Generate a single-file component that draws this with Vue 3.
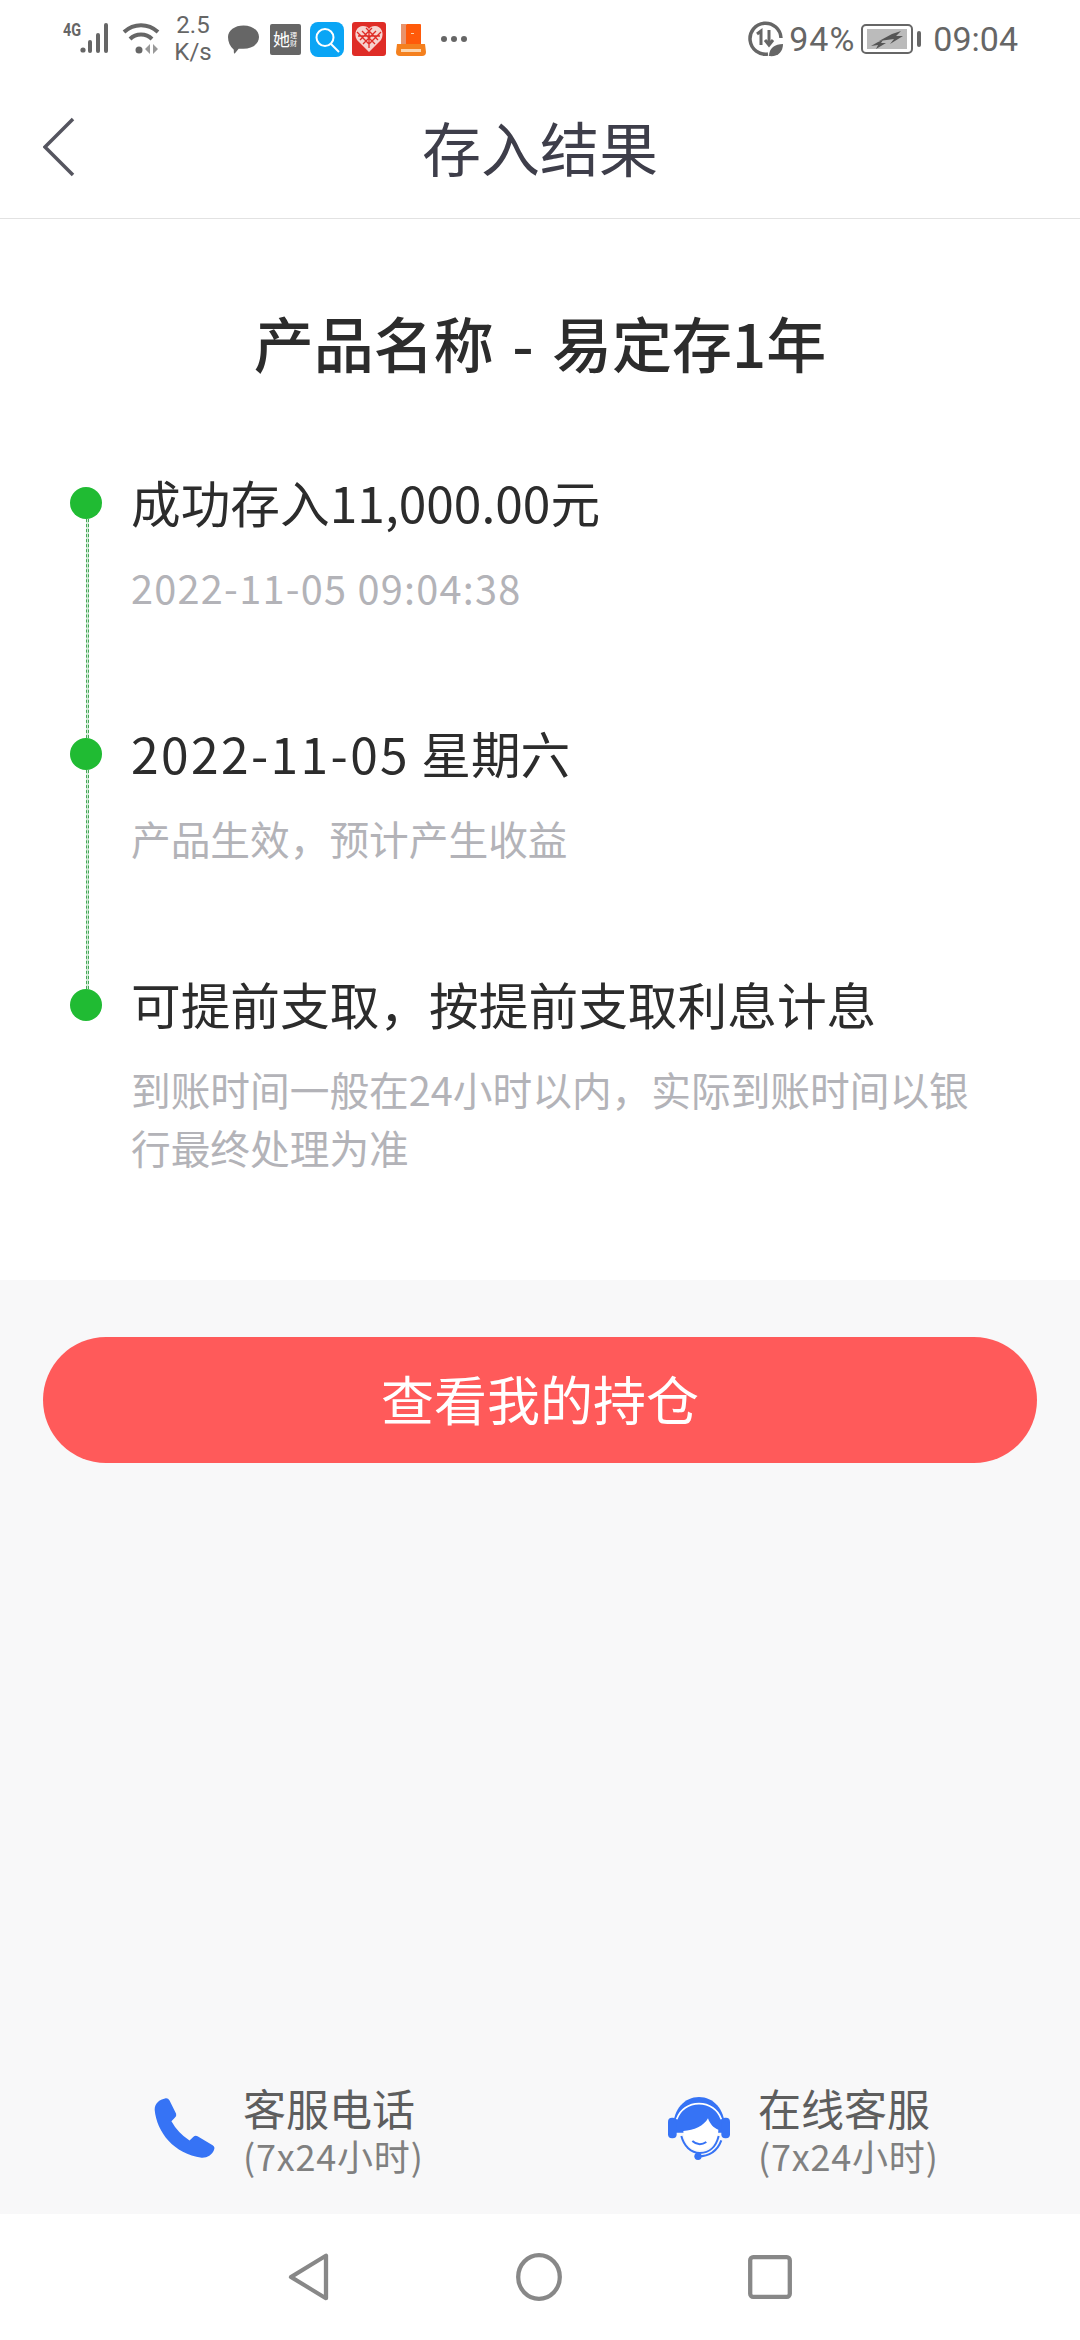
<script setup>
const steps = [
  { num: '', title: '成功存入11,000.00元', desc: '2022-11-05 09:04:38', wideDesc: true },
  { num: '2022-11-05', title: ' 星期六', desc: '产品生效，预计产生收益' },
  { num: '', title: '可提前支取，按提前支取利息计息', desc: '到账时间一般在24小时以内，实际到账时间以银行最终处理为准' },
]
</script>

<template>
  <div class="page">
    <div class="status-bar">
      <div class="status-left">
        <span class="net">4G</span>
        <svg width="32" height="32" viewBox="0 0 32 32">
          <circle cx="3" cy="27" r="2.6" fill="#666" />
          <rect x="8" y="17" width="4" height="13" rx="2" fill="#666" />
          <rect x="16" y="10" width="4" height="20" rx="2" fill="#666" />
          <rect x="24" y="0" width="4" height="30" rx="2" fill="#666" />
        </svg>
        <svg class="wifi" width="38" height="32" viewBox="0 0 38 32">
          <path d="M2 9C12 0 26 0 36 9" fill="none" stroke="#666" stroke-width="4" />
          <path d="M8 16C14 10 24 10 30 16" fill="none" stroke="#666" stroke-width="4" />
          <circle cx="17" cy="27" r="3.5" fill="#666" />
          <path d="M28 21v10l-5-5zM31 21l5 5-5 5z" fill="#999" />
        </svg>
        <div class="speed"><span>2.5</span><span>K/s</span></div>
        <svg class="bubble" width="31" height="32" viewBox="0 0 32 32">
          <path d="M16 2c9 0 16 5 16 12s-7 12-16 12c-2 0-4 0-5 0l-4 5c-1 0-1-1-1-4C2 24 0 19 0 14 0 7 7 2 16 2z" fill="#666" />
        </svg>
        <div class="app-ta"><span class="ta-big">她</span><span class="ta-small">理财</span></div>
        <svg class="app-search" width="34" height="35" viewBox="0 0 34 35">
          <rect width="34" height="35" rx="8" fill="#0aa5f5" />
          <circle cx="15" cy="15.500" r="8.500" fill="#0aa5f5" stroke="#fff" stroke-width="2" />
          <path d="M21 22l8 8" stroke="#fff" stroke-width="2" />
        </svg>
        <svg class="app" width="34" height="34" viewBox="0 0 34 34">
          <rect width="34" height="34" rx="3" fill="#df2c26" />
          <path d="M17 30L5 18C1 11 5 4 11 4c3 0 5 1 6 3 1-2 3-3 6-3 6 0 10 7 6 14z" fill="#f6d3cf" />
          <path d="M5 10l12 12 12-12M8 18L20 6M26 18L14 6M11 22L24 9M23 22L10 9M6 14h22M17 8v18" fill="none" stroke="#df2c26" stroke-width="1.300" />
        </svg>
        <svg class="app" width="34" height="34" viewBox="0 0 34 34">
          <rect x="7" y="2" width="5" height="23" fill="#e8936c" />
          <rect x="12" y="2" width="15" height="23" rx="1" fill="#ff5a0a" />
          <rect x="17" y="11" width="3" height="1" fill="#fbd5ae" />
          <path d="M3 22h28l1 8q0 4-4 4H6q-4 0-4-4z" fill="#f4801e" />
          <rect x="7" y="27" width="20" height="3" fill="#fbd5ae" />
        </svg>
        <div class="more"><i></i><i></i><i></i></div>
      </div>
      <div class="status-right">
        <svg width="36" height="36" viewBox="0 0 36 36">
          <path d="M20 33A15.500 15.500 0 1 1 33 17" fill="none" stroke="#666" stroke-width="3.500" />
          <path d="M9 13l4-3v14M21 9v14M17 19l4 5 4-5" fill="none" stroke="#666" stroke-width="3" />
          <path d="M21 35c0-8 6-12 14-12 0 8-5 13-14 12z" fill="#666" />
        </svg>
        <span class="pct">94%</span>
        <div class="battery">
          <div class="battery-box">
            <div class="battery-fill">
              <svg width="40" height="20" viewBox="0 0 40 20">
                <path d="M12 12L25 5 34 2 29 7H36L23 15 27 10Z" fill="#555" />
                <path d="M4 17L11 13 16 11 14 14H19L9 20 11 16Z" fill="#555" />
              </svg>
            </div>
          </div>
          <i class="battery-nub"></i>
        </div>
        <span class="clock">09:04</span>
      </div>
    </div>

    <header class="nav">
      <svg class="back" width="32" height="60" viewBox="0 0 32 60">
        <path d="M30 2L2 30l28 28" fill="none" stroke="#55555f" stroke-width="3.500" />
      </svg>
      <h1>存入结果</h1>
    </header>

    <section class="result">
      <h2>产品名称 - 易定存1年</h2>
      <div class="timeline">
        <div v-for="(step, i) in steps" :key="i" class="step">
          <i class="dot"></i>
          <i v-if="i < steps.length - 1" class="line"></i>
          <div class="step-title"><span v-if="step.num" class="num">{{ step.num }}</span>{{ step.title }}</div>
          <div class="step-desc" :class="{ wide: step.wideDesc }">{{ step.desc }}</div>
        </div>
      </div>
    </section>

    <main class="rest">
      <button type="button" class="btn-main"><span>查看我的持仓</span></button>

      <div class="contacts">
        <div class="contact">
          <svg width="62" height="62" viewBox="70 110 185 185">
            <path d="M72 148C72 130 85 118 105 114Q112 113 116 120L136 160Q138 167 132 172L122 182Q140 215 176 240L187 229Q193 224 200 227L245 254Q253 259 249 268C243 283 228 292 212 291C130 280 78 215 72 148Z" fill="#3673f5" />
          </svg>
          <div class="contact-text">
            <div class="contact-name">客服电话</div>
            <div class="contact-time">(7x24小时)</div>
          </div>
        </div>
        <div class="contact">
          <svg width="64" height="66" viewBox="80 102 190 198">
            <path d="M98 195C98 145 132 108 175 108C218 108 252 145 252 195V215H98Z" fill="#3673f5" />
            <rect x="82" y="170" width="26" height="62" rx="12" fill="#3673f5" />
            <rect x="242" y="170" width="26" height="62" rx="12" fill="#3673f5" />
            <path d="M108 175C118 145 145 128 175 128C205 128 232 145 242 175" fill="none" stroke="#fff" stroke-width="5" />
            <path d="M128 210C160 208 190 195 202 172C208 190 220 202 233 206C233 245 205 268 175 268C148 268 128 242 128 210Z" fill="#fff" />
            <path d="M155 240Q175 258 197 243" fill="none" stroke="#3673f5" stroke-width="6" />
            <path d="M122 225C130 255 150 276 178 276C205 276 226 258 234 225" fill="none" stroke="#3673f5" stroke-width="6" />
            <circle cx="172" cy="286" r="11" fill="#3673f5" />
            <path d="M172 286C205 286 230 270 242 238" fill="none" stroke="#3673f5" stroke-width="6" />
          </svg>
          <div class="contact-text">
            <div class="contact-name">在线客服</div>
            <div class="contact-time">(7x24小时)</div>
          </div>
        </div>
      </div>
    </main>

    <footer class="sys-nav">
      <svg width="42" height="50" viewBox="0 0 42 54" preserveAspectRatio="none">
        <path d="M38 4V50L3 27Z" fill="none" stroke="#888" stroke-width="4.300" stroke-linejoin="round" />
      </svg>
      <svg width="46" height="48" viewBox="0 0 46 48">
        <ellipse cx="23" cy="24" rx="20.800" ry="21.800" fill="none" stroke="#888" stroke-width="4.300" />
      </svg>
      <svg width="44" height="44" viewBox="0 0 44 44">
        <rect x="2.200" y="2.200" width="39.600" height="39.600" rx="3" fill="none" stroke="#888" stroke-width="4.300" />
      </svg>
    </footer>
  </div>
</template>

<style>
html, body {
  margin: 0;
  background: #fff;
}
</style>

<style scoped>
.page {
  width: 1080px;
  height: 2340px;
  display: flex;
  flex-direction: column;
  background: #fff;
  font-family: "Noto Sans CJK SC", "Noto Sans", sans-serif;
  overflow: hidden;
}

.status-bar {
  height: 78px;
  flex-shrink: 0;
  box-sizing: border-box;
  padding: 0 62px 0 63px;
  display: flex;
  align-items: center;
  justify-content: space-between;
  color: #666;
  font-family: "Roboto", sans-serif;
}

.status-left {
  display: flex;
  align-items: center;
}

.status-left > svg {
  flex-shrink: 0;
}

.net {
  width: 17px;
  margin-bottom: 18px;
  font-size: 18px;
  line-height: 14px;
  font-weight: 700;
  transform: scaleX(0.8);
  transform-origin: left;
}

.wifi {
  margin-left: 10px;
}

.speed {
  display: flex;
  flex-direction: column;
  align-items: center;
  width: 34px;
  margin-left: 16px;
  font-size: 24px;
  line-height: 27px;
}

.bubble {
  margin-left: 18px;
}

.app-ta {
  width: 31px;
  height: 31px;
  margin-left: 11px;
  background: #666;
  border-radius: 2px;
  display: flex;
  align-items: center;
  justify-content: center;
  color: #fff;
  font-family: "Noto Sans CJK SC", sans-serif;
  overflow: hidden;
}

.ta-big {
  font-size: 17px;
  line-height: 20px;
}

.ta-small {
  font-size: 7px;
  line-height: 8px;
  width: 8px;
}

.app-search {
  margin-left: 9px;
}

.app {
  margin-left: 8px;
}

.more {
  display: flex;
  gap: 4px;
  margin-left: 13px;
}

.more i {
  width: 6px;
  height: 6px;
  border-radius: 50%;
  background: #666;
}

.status-right {
  display: flex;
  align-items: center;
  font-size: 34px;
}

.pct {
  margin-left: 5px;
  letter-spacing: 1px;
}

.battery {
  display: flex;
  align-items: center;
  gap: 4px;
  margin-left: 6px;
}

.battery-box {
  width: 52px;
  height: 30px;
  box-sizing: border-box;
  border: 2px solid #666;
  border-radius: 5px;
  padding: 3px 4px;
}

.battery-fill {
  height: 100%;
  background: #bbb;
  display: flex;
  align-items: center;
  justify-content: center;
}

.battery-nub {
  width: 4px;
  height: 16px;
  background: #666;
  border-radius: 2px;
}

.clock {
  margin-left: 12px;
}

.nav {
  height: 141px;
  flex-shrink: 0;
  position: relative;
  display: flex;
  align-items: center;
  justify-content: center;
  padding-bottom: 3px;
  border-bottom: 1px solid #e2e2e2;
  box-sizing: border-box;
}

.back {
  position: absolute;
  left: 43px;
  top: 39px;
}

.nav h1 {
  margin: 0;
  font-size: 59px;
  font-weight: 400;
  color: #3e3e4a;
}

.result {
  flex-shrink: 0;
  background: #fff;
  padding-bottom: 1px;
}

.result h2 {
  margin: 81px 0 84px;
  text-align: center;
  font-size: 60px;
  line-height: 84px;
  font-weight: 500;
  word-spacing: 5px;
  color: #2c2c2c;
}

.timeline {
  padding: 0 90px 0 131px;
}

.step {
  position: relative;
  padding-bottom: 103px;
}

.dot {
  position: absolute;
  left: -61px;
  top: 19px;
  width: 32px;
  height: 32px;
  border-radius: 50%;
  background: #20bb33;
}

.line {
  position: absolute;
  left: -45px;
  top: 51px;
  bottom: -19px;
  width: 1px;
  border-left: 1px dashed #45a858;
  border-right: 1px dashed #45a858;
  background: #d4ecd8;
}

.step-title {
  font-size: 49.7px;
  line-height: 66px;
  color: #2c2c2c;
}

.num {
  letter-spacing: 2.4px;
}

.step-desc {
  margin-top: 24px;
  font-size: 39.7px;
  line-height: 58px;
  color: #b3b3b8;
}

.step-desc.wide {
  letter-spacing: 1.25px;
}

.rest {
  flex: 1;
  background: #f8f8f9;
  display: flex;
  flex-direction: column;
}

.btn-main {
  display: block;
  margin: 57px 43px 0;
  height: 126px;
  padding: 0 0 4px;
  border: none;
  border-radius: 63px;
  background: #ff5a5a;
  color: #fff;
  font-family: inherit;
  font-size: 53px;
}

.contacts {
  margin-top: auto;
  height: 100px;
  margin-bottom: 36px;
  padding-left: 154px;
  display: grid;
  grid-template-columns: 513px 1fr;
  align-items: center;
}

.contact {
  display: flex;
  align-items: center;
  gap: 27px;
}

.contact-text {
  padding-top: 4px;
}

.contact-name {
  font-size: 43px;
  line-height: 50px;
  color: #5e5e5e;
}

.contact-time {
  font-size: 36px;
  line-height: 46px;
  letter-spacing: 0.8px;
  color: #808080;
}

.sys-nav {
  height: 126px;
  flex-shrink: 0;
  box-sizing: border-box;
  background: #fff;
  display: flex;
  align-items: center;
  justify-content: center;
  gap: 186px;
}
</style>
